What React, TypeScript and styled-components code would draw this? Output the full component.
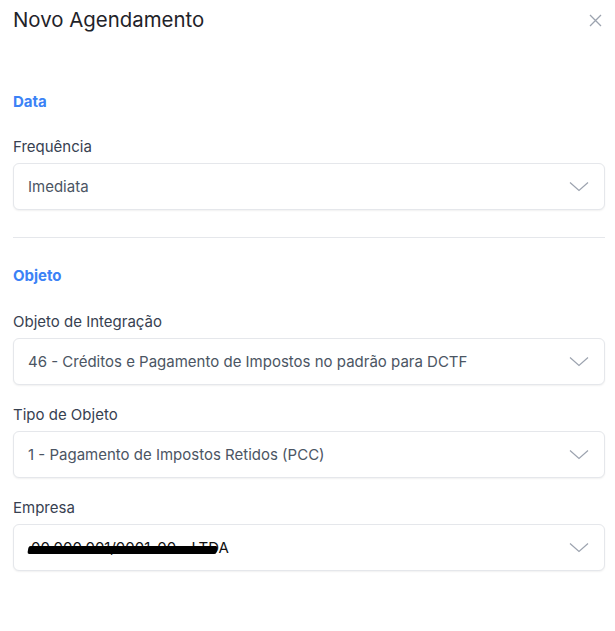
import React from "react";
import styled, { createGlobalStyle } from "styled-components";

const GlobalStyle = createGlobalStyle`
  html, body {
    margin: 0;
    padding: 0;
    background: #ffffff;
  }
  body {
    font-family: Inter, "Noto Sans", "Liberation Sans", sans-serif;
    -webkit-font-smoothing: antialiased;
  }
`;

const fields = {
  data: [{ label: "Frequência", value: "Imediata" }],
  objeto: [
    {
      label: "Objeto de Integração",
      value: "46 - Créditos e Pagamento de Impostos no padrão para DCTF",
    },
    { label: "Tipo de Objeto", value: "1 - Pagamento de Impostos Retidos (PCC)" },
  ],
};

const ChevronDown = () => (
  <svg width="20" height="11" viewBox="0 0 20 11" fill="none">
    <path d="M1 1.5 L10 9.5 L19 1.5" stroke="#9ca3af" strokeWidth="1.2" />
  </svg>
);

const CloseIcon = () => (
  <svg width="13" height="13" viewBox="0 0 13 13" fill="none">
    <path d="M1 1 L12 12 M12 1 L1 12" stroke="#9ca3af" strokeWidth="1.3" />
  </svg>
);

const App = () => {
  return (
    <>
      <GlobalStyle />
      <S.Panel>
        <S.Header>
          <S.Title>Novo Agendamento</S.Title>
          <S.CloseButton aria-label="Fechar">
            <CloseIcon />
          </S.CloseButton>
        </S.Header>

        <S.Section $top={58} $titleGap={5}>
          <S.SectionTitle>Data</S.SectionTitle>
          {fields.data.map((f) => (
            <S.Field key={f.label}>
              <S.Label>{f.label}</S.Label>
              <S.Select>
                <S.Value>{f.value}</S.Value>
                <ChevronDown />
              </S.Select>
            </S.Field>
          ))}
        </S.Section>

        <S.Divider />

        <S.Section $top={28} $titleGap={6}>
          <S.SectionTitle>Objeto</S.SectionTitle>
          {fields.objeto.map((f) => (
            <S.Field key={f.label}>
              <S.Label>{f.label}</S.Label>
              <S.Select>
                <S.Value>{f.value}</S.Value>
                <ChevronDown />
              </S.Select>
            </S.Field>
          ))}
          <S.Field>
            <S.Label>Empresa</S.Label>
            <S.Select>
              <S.Value>
                <S.Redacted>00.000.001/0001-00 - LTDA</S.Redacted>
              </S.Value>
              <ChevronDown />
            </S.Select>
          </S.Field>
        </S.Section>
      </S.Panel>
    </>
  );
};

export default App;

const S = {
  Panel: styled.div`
    width: 615px;
    height: 631px;
    box-sizing: border-box;
    padding: 6px 10px 0 13px;
    background: #ffffff;
  `,
  Header: styled.div`
    display: flex;
    align-items: center;
    justify-content: space-between;
    height: 28px;
  `,
  Title: styled.h1`
    margin: 0;
    font-size: 20.4px;
    font-weight: 400;
    line-height: 28px;
    color: #1f2329;
  `,
  CloseButton: styled.button`
    display: flex;
    align-items: center;
    justify-content: center;
    padding: 0;
    margin-right: 3px;
    border: none;
    background: none;
    cursor: pointer;
  `,
  Section: styled.div<{ $top: number; $titleGap: number }>`
    display: flex;
    flex-direction: column;
    gap: 20px;
    padding-top: ${(p) => p.$top}px;
    & > h2 {
      margin-bottom: ${(p) => p.$titleGap}px;
    }
  `,
  SectionTitle: styled.h2`
    margin: 0;
    font-size: 15px;
    font-weight: 700;
    line-height: 20px;
    color: #3b82f6;
  `,
  Field: styled.div`
    display: flex;
    flex-direction: column;
    gap: 6px;
  `,
  Label: styled.label`
    font-size: 15px;
    line-height: 20px;
    color: #374151;
  `,
  Select: styled.div`
    display: flex;
    align-items: center;
    justify-content: space-between;
    height: 47px;
    box-sizing: border-box;
    padding: 0 15px 0 14px;
    border: 1px solid #e5e7eb;
    border-radius: 6px;
    box-shadow: 0 1px 2px rgba(0, 0, 0, 0.06);
    background: #ffffff;
  `,
  Value: styled.span`
    font-size: 15px;
    line-height: 20px;
    color: #4b5563;
  `,
  Redacted: styled.span`
    position: relative;
    display: inline-block;
    padding-left: 3px;
    color: #111;
    &::after {
      content: "";
      position: absolute;
      left: 0;
      right: 12px;
      top: 8px;
      height: 8px;
      background: #000;
      border-radius: 2px;
      transform: skewX(-10deg);
    }
  `,
  Divider: styled.hr`
    margin: 27px 0 0;
    border: none;
    border-top: 1px solid #e5e7eb;
  `,
};
